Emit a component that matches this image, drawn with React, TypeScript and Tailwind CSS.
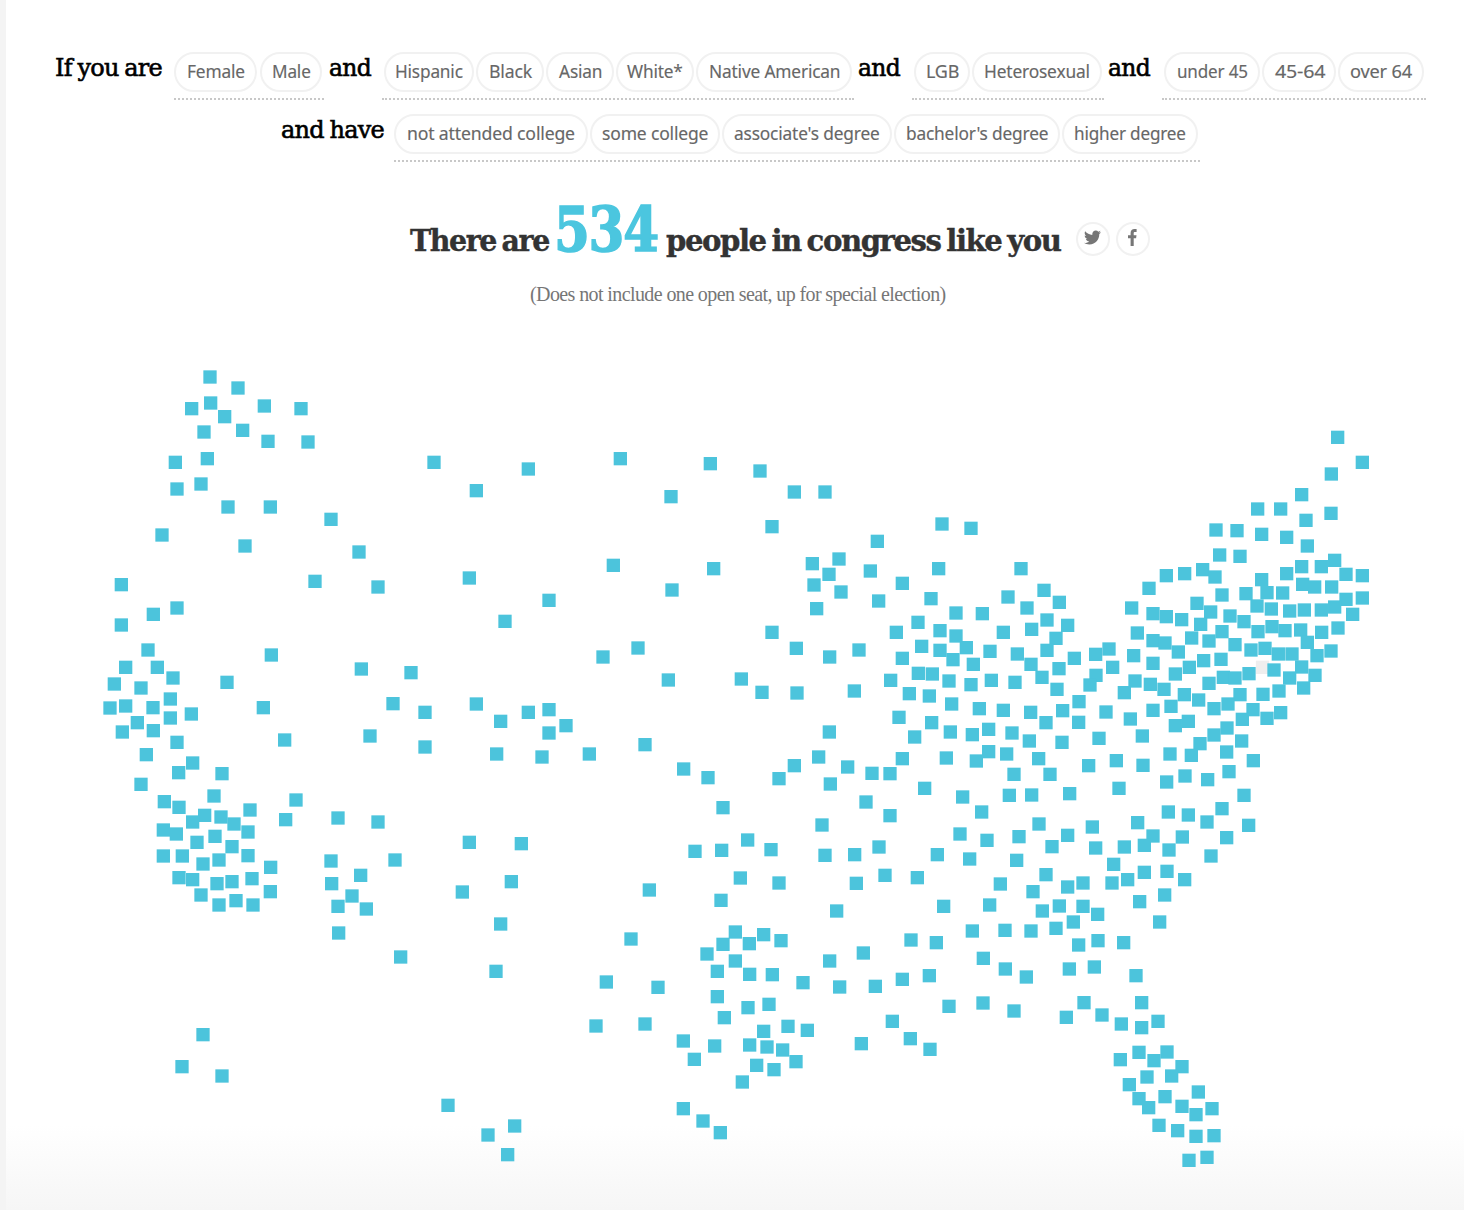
import React from "react";
import { FaTwitter } from "react-icons/fa";

/* Seats are grouped by region. Each region has an origin on the page grid and
   lists its seat centres in thirds of a unit from that origin. */
type Region = { x: number; y: number; seats: string };

const regions: Region[] = [
  {
    x: 80,
    y: 350,
    seats:
      "390,81 474,114 335,176 392,159 434,200 553,168 663,176 372,246 488,241 564,274 684,276 286,337 382,326 291,417 363,402 444,471 571,471 753,508 1062,337 1189,422 246,555 495,588 837,606 705,694 894,711 1168,684 124,704 291,774 220,793 124,825",
  },
  {
    x: 80,
    y: 630,
    seats:
      "204,60 574,75 137,112 232,112 279,144 103,162 183,174 441,157 271,207 90,234 137,228 219,233 271,264 334,252 172,278 127,306 220,302 550,233 291,337 614,330 199,374 338,399 296,428 426,431 183,463 253,515 297,532 402,498 648,510 374,556 338,576 423,561 462,582 510,540 250,600 289,612 504,606 617,569 351,637 405,619 456,650 250,678 307,678 369,702 417,690 504,677 572,712 297,743 338,749 411,761 456,755 516,746 363,795 417,825 468,812 519,825 571,785 844,117 993,128 939,221 1035,247 870,318 1035,351 774,564 894,576 753,693 755,761 842,736 945,690 816,798 774,829 859,837 776,909 962,981 1168,637 1147,786 1189,222",
  },
  {
    x: 860,
    y: 500,
    seats:
      "246,72 333,85 52,124 31,213 236,206 483,206 127,250 213,296 56,303 444,291 552,271 598,307 288,339 367,341 501,324 174,367 109,397 240,392 288,408 430,397 515,388 561,360 623,376 588,415 185,439 240,451 319,443 279,479 390,454 561,451 472,462 127,475 340,493 513,493 643,475 707,463 747,447 597,506 175,520 217,522 546,532 758,502 708,526 92,541 267,543 333,554 394,541 465,547 690,555 148,581 591,568 208,588 657,605 275,612 358,626 430,631 512,637 608,632 738,636 117,652 215,668 558,668 656,667 271,696 164,711 337,704 386,688 456,699 508,723 606,727 717,715",
  },
  {
    x: 1100,
    y: 420,
    seats:
      "713,52 787,127 694,162 605,224 473,267 542,267 618,301 693,280 348,330 411,332 485,343 560,352 622,378 359,405 420,409 605,440 664,440 704,421 308,449 345,471 199,467 254,461 560,461 485,479 738,463 787,467 147,505 608,493 644,501 695,501 366,525 438,521 501,518 548,519 95,564 291,550 738,538 787,534 471,558 514,567 332,576 569,573 613,570 664,570 704,561",
  },
  {
    x: 1100,
    y: 600,
    seats:
      "159,41 199,50 245,59 302,73 390,48 432,65 758,43 112,99 159,122 195,129 275,114 327,123 366,95 474,95 516,80 555,92 602,90 665,97 714,84 622,127 405,134 235,156 453,150 495,145 535,162 576,162 651,167 693,153 101,167 159,190 311,182 363,178 522,210 605,201 268,202 226,222 447,221 569,234 645,226 370,232 405,234 105,243 151,253 327,250 192,268 73,278 611,264 253,284 296,300 420,284 489,283 537,273 159,331 213,319 342,326 384,312 459,329 542,338 501,355 91,357 265,364 226,377 427,358 381,384 342,405 127,408 300,431 425,423 210,462 274,466 380,456 49,482 129,496 460,482 387,515 255,528 323,539 200,546 57,565 432,586",
  },
  {
    x: 860,
    y: 740,
    seats:
      "127,56 259,54 349,63 386,35 440,42 536,56 36,100 90,101 462,103 570,103 686,77 194,145 308,171 90,227 448,166 515,165 629,161 365,216 537,252 300,282 381,301 477,290 623,286 697,261 57,321 576,320 707,324 232,344 329,357 470,361 75,406 172,413 558,404 421,432 519,455 623,441 669,429 251,499 389,495 547,513 598,498 669,499 713,523 640,546 337,573 435,571 513,573 588,565 656,615 714,602 791,608 153,600 229,608 370,655 436,687 499,711 628,687 703,681 208,707 127,718 46,739 828,707 267,799 369,789 462,813 619,832 672,788 726,825 784,852 845,788 845,863 894,844 97,844 151,896 210,928 833,248 879,288 793,321 853,316 925,216 985,225 1041,246 1086,206 1166,256 967,291 927,330 1100,293 1053,348 761,373 756,429 803,419 853,397 921,394 974,419 839,485 914,465 899,546",
  },
  {
    x: 580,
    y: 820,
    seats:
      "345,94 425,91 503,60 573,89 735,106 824,104 481,174 597,189 829,190 208,210 423,241 770,273 153,357 466,336 429,373 551,344 508,371 603,362 381,402 466,423 412,454 509,463 577,464 749,423 79,486 234,502 669,488 779,501 412,530 504,563 567,553 433,593 48,618 195,612 310,663 551,634 624,619 682,631 404,678 343,718 509,675 561,681 608,690 530,736 648,725 582,749 487,786 310,866 369,903 421,938 850,399 844,671",
  },
  {
    x: 1040,
    y: 980,
    seats:
      "297,217 381,216 241,239 342,242 426,260 395,288 321,291 268,314 475,336 297,356 375,350 326,383 426,379 516,386 468,404 357,436 413,452 468,469 522,467 447,541 501,532",
  },
  {
    x: 480,
    y: 440,
    seats:
      "145,87 421,56 691,71 840,93 573,170 943,156 1035,156 876,260 400,376 701,386 576,450 207,481 75,544 997,371 1077,357 1047,403 1002,435 1083,456 1010,506 876,577 474,624 369,651 949,625 1049,651 1137,630 565,720 784,717 846,757 951,759 1123,753 207,809 145,817 62,844 258,857 207,879 50,942 186,951 328,942 495,914 611,987 684,1013 943,977 1016,951 897,1016 1048,876 1103,981 1051,1032 1158,1086 729,1103 1026,1155 124,1211 94,1325 62,1452 48,1594",
  },
  { x: 170, y: 1020, seats: "99,44 36,140 156,168 834,256 954,345 1034,318 1013,404" },
];

const SEAT = 13.3;

function CongressMap() {
  return (
    <svg width="1464" height="850" viewBox="0 350 1464 850" className="block" aria-label="Map of congressional seats">
      <rect x={1262.5 - SEAT / 2} y={667.3 - SEAT / 2} width={SEAT} height={SEAT} fill="#eeeeee" />
      {regions.map((r, i) => (
        <g key={i} fill="#4cc4dc">
          {r.seats.split(" ").map((p) => {
            const [cx, cy] = p.split(",").map(Number);
            return (
              <rect
                key={p}
                x={r.x + cx / 3 - SEAT / 2}
                y={r.y + cy / 3 - SEAT / 2}
                width={SEAT}
                height={SEAT}
              />
            );
          })}
        </g>
      ))}
    </svg>
  );
}

/* Text squeezed or stretched horizontally so that it fills exactly `width`. */
function Fit({ width, className = "", children }: { width: number; className?: string; children: React.ReactNode }) {
  const ref = React.useRef<HTMLSpanElement>(null);
  const [k, setK] = React.useState(1);
  React.useLayoutEffect(() => {
    if (ref.current) setK(width / ref.current.offsetWidth);
  }, [width]);
  return (
    <span className={`inline-block whitespace-nowrap ${className}`} style={{ width }}>
      <span ref={ref} className="inline-block origin-left" style={{ transform: `scaleX(${k})` }}>
        {children}
      </span>
    </span>
  );
}

function Word({ width, children }: { width: number; children: string }) {
  return (
    <Fit
      width={width}
      className="mt-[1px] font-['DejaVu_Serif'] text-[24px] leading-[30px] tracking-[-0.03em] text-black [-webkit-text-stroke:0.6px_black] [word-spacing:-0.06em]"
    >
      {children}
    </Fit>
  );
}

type PillSpec = [label: string, width: number, textWidth: number];

function Group({ className, pills }: { className: string; pills: PillSpec[] }) {
  return (
    <div className={`flex h-12 justify-between border-b-2 border-dotted border-[#c8c8c8] pr-[2px] ${className}`}>
      {pills.map(([label, w, tw]) => (
        <button
          key={label}
          style={{ width: w }}
          className="flex h-10 shrink-0 items-center justify-center rounded-[20px] border-2 border-[#f1f1f1] bg-white pb-[2px] font-['Noto_Sans'] text-[18.5px] leading-[24px] tracking-[-0.01em] text-[#676767] [-webkit-text-stroke:0.15px_#676767]"
        >
          <Fit width={tw}>{label}</Fit>
        </button>
      ))}
    </div>
  );
}

export default function App() {
  return (
    <div className="h-[1210px] w-[1464px] overflow-hidden border-l-[6px] border-[#f4f4f4] bg-[linear-gradient(to_bottom,#ffffff_0,#ffffff_1125px,#f6f6f6_1210px)]">
      <div className="mt-[52px] flex h-[62px] items-start pl-[49px]">
        <Word width={107}>If you are</Word>
        <Group
          className="ml-[12px] w-[150px]"
          pills={[
            ["Female", 83, 58],
            ["Male", 62, 39],
          ]}
        />
        <div className="ml-[5px] flex">
          <Word width={42}>and</Word>
        </div>
        <Group
          className="ml-[11px] w-[472px] pl-[2px]"
          pills={[
            ["Hispanic", 90, 68],
            ["Black", 68, 43],
            ["Asian", 68, 43],
            ["White*", 78, 56],
            ["Native American", 156, 131],
          ]}
        />
        <div className="ml-[4px] mr-[1px] flex">
          <Word width={42}>and</Word>
        </div>
        <Group
          className="ml-[11px] w-[192px] pl-[2px]"
          pills={[
            ["LGB", 56, 33],
            ["Heterosexual", 130, 106],
          ]}
        />
        <div className="ml-[4px] mr-[1px] flex">
          <Word width={42}>and</Word>
        </div>
        <Group
          className="ml-[11px] w-[264px] pl-[2px]"
          pills={[
            ["under 45", 96, 71],
            ["45-64", 74, 50],
            ["over 64", 86, 62],
          ]}
        />
      </div>
      <div className="ml-[275px] flex h-[62px] items-start">
        <Word width={103}>and have</Word>
        <Group
          className="ml-[10px] w-[806px]"
          pills={[
            ["not attended college", 194, 168],
            ["some college", 130, 106],
            ["associate's degree", 170, 146],
            ["bachelor's degree", 166, 142],
            ["higher degree", 136, 112],
          ]}
        />
      </div>
      <div className="flex h-[100px] items-start pt-[23px]">
        <h1 className="ml-[404px] flex items-baseline font-['DejaVu_Serif'] text-[30.5px] font-bold leading-[62px] tracking-[-0.05em] text-[#333333] [-webkit-text-stroke:0.4px_#333333] [word-spacing:-0.1em]">
          <Fit width={139}>There are</Fit>
          <Fit width={104} className="ml-[5px] text-[61px] text-[#4bc6df] [-webkit-text-stroke:1.6px_#4bc6df]">534</Fit>
          <Fit width={394} className="ml-[8px]">people in congress like you</Fit>
        </h1>
        <div className="ml-[16px] mt-[23px] flex gap-[6px] text-[#767676]">
          <button
            className="flex size-[34px] items-center justify-center rounded-full border-2 border-[#f1f1f1] bg-white pb-[3px] pr-[1px]"
            aria-label="Share on Twitter"
          >
            <FaTwitter size={17} />
          </button>
          <button
            className="flex size-[34px] items-center justify-center rounded-full border-2 border-[#f1f1f1] bg-white pb-[3px] pr-[2px]"
            aria-label="Share on Facebook"
          >
            <svg width="9" height="17" viewBox="0 0 9 17" fill="currentColor">
              <path d="M2.6 17V9.2H0V6.2h2.6V4c0-2.6 1.5-4 3.9-4H8.6v3H7c-1 0-1.3.5-1.3 1.3v1.9h2.8l-.4 3H5.7V17z" />
            </svg>
          </button>
        </div>
      </div>
      <p className="h-[74px] pl-[524px] pt-[5px] font-['Liberation_Serif'] text-[20px] leading-[26px] tracking-[-0.03em] text-[#767676]">
        <Fit width={416}>(Does not include one open seat, up for special election)</Fit>
      </p>
      <div className="-ml-[6px]">
        <CongressMap />
      </div>
    </div>
  );
}
